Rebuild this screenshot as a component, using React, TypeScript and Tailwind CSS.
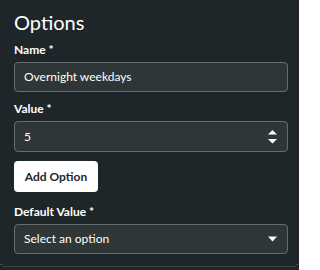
import React from "react";

function Label({ children }: { children: React.ReactNode }) {
  return (
    <div className="text-[12px] leading-[16px] font-bold text-white mb-1">
      {children} <span>*</span>
    </div>
  );
}

export default function App() {
  return (
    <div
      className="w-[299px] h-[270px] bg-[#1f2629] flex flex-col pt-[10px] overflow-hidden"
      style={{ fontFamily: "Lato, 'Liberation Sans', sans-serif" }}
    >
      <div className="pl-[14px] pr-[11px] flex flex-col">
        <h2 className="text-[20px] leading-[24px] text-white font-normal">Options</h2>

        <div className="mt-[8px]">
          <Label>Name</Label>
          <div className="h-[30px] rounded-[4px] border border-[#686e70] bg-[#2f3638] flex items-center px-[9px] text-[12px] text-white">
            Overnight weekdays
          </div>
        </div>

        <div className="mt-[9px]">
          <Label>Value</Label>
          <div className="h-[31px] rounded-[4px] border border-[#686e70] bg-[#2f3638] flex items-center justify-between pl-[9px] pr-[9px] text-[12px] text-white">
            <span>5</span>
            <svg width="9" height="14" viewBox="0 0 9 14" className="mr-[1px]">
              <polygon points="4.5,0 9,4.5 0,4.5" fill="#ffffff" />
              <polygon points="0,9 9,9 4.5,13.5" fill="#ffffff" />
            </svg>
          </div>
        </div>

        <div className="mt-[9px]">
          <button className="h-[31px] w-[84px] rounded-[4px] bg-white text-[#1f2629] text-[12px] font-bold flex items-center justify-center">
            Add Option
          </button>
        </div>

        <div className="mt-[12px]">
          <Label>Default Value</Label>
          <div className="h-[30px] rounded-[4px] border border-[#686e70] bg-[#2f3638] flex items-center justify-between pl-[9px] pr-[9px] text-[12px] text-white">
            <span>Select an option</span>
            <svg width="9" height="6" viewBox="0 0 9 6" className="mr-[1px]">
              <polygon points="0,0.5 9,0.5 4.5,5.5" fill="#ffffff" />
            </svg>
          </div>
        </div>
      </div>

      <div className="mt-[10px] flex items-start">
        <div className="w-[3px] h-[1px] bg-[#3b4346]" />
        <div className="flex-1 h-[1px] mt-[2px] bg-[#3b4346]" />
        <div className="w-[3px] h-[1px] bg-[#3b4346]" />
      </div>
    </div>
  );
}
